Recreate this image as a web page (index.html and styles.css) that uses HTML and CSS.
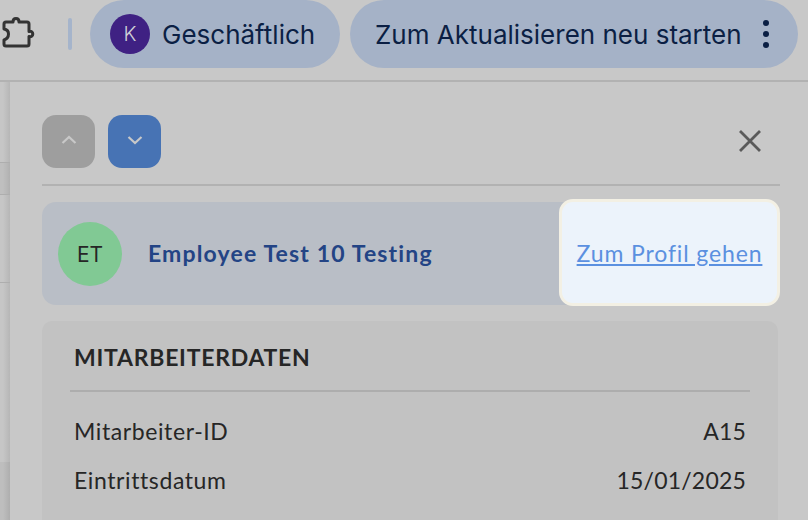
FILE: index.html
```html
<!DOCTYPE html>
<html lang="de">
<head>
<meta charset="utf-8">
<title>Mitarbeiter</title>
<link rel="stylesheet" href="styles.css">
</head>
<body>
<header class="toolbar">
  <svg class="puzzle" width="34" height="34" viewBox="0 0 34 34" fill="none" stroke="#333" stroke-width="3" stroke-linejoin="round" stroke-linecap="round">
    <path d="M3 8 Q3 6 5 6 H12 C12 3.500 13 2.500 15 2.500 C17 2.500 18 3.500 18 6 H26 Q28 6 28 8 V15.500 C30 14.800 31.800 16 31.800 18 C31.800 20 30 21.200 28 20.500 V28 Q28 30 26 30 H5 Q3 30 3 28 V24 C6 23 7.500 20.500 7.500 18 C7.500 15.500 6 13.500 3 13 Z"/>
  </svg>
  <span class="sep"></span>
  <div class="chip chip-profile">
    <span class="avatar">K</span>
    <span class="chip-label">Geschäftlich</span>
  </div>
  <div class="chip chip-update">
    <span class="chip-label">Zum Aktualisieren neu starten</span>
    <span class="dots"><i></i><i></i><i></i></span>
  </div>
</header>
<div class="stage">
  <aside class="backdrop">
    <div class="back-band"></div>
    <div class="back-row"></div>
    <div class="back-foot"></div>
  </aside>
  <main class="panel">
    <div class="panel-head">
      <button class="nav nav-up" type="button" aria-label="Zurück">
        <svg width="16" height="10" viewBox="0 0 16 10" fill="none" stroke="#c8c8c8" stroke-width="2.200"><path d="M1.500 8 L8 2 L14.500 8"/></svg>
      </button>
      <button class="nav nav-down" type="button" aria-label="Weiter">
        <svg width="16" height="10" viewBox="0 0 16 10" fill="none" stroke="#c8c8c8" stroke-width="2.200"><path d="M1.500 2 L8 8 L14.500 2"/></svg>
      </button>
      <svg class="close" width="24" height="24" viewBox="0 0 24 24" fill="none" stroke="#5a5a5a" stroke-width="2.800"><path d="M2 2 L22 22 M22 2 L2 22"/></svg>
    </div>
    <section class="employee">
      <span class="initials">ET</span>
      <span class="emp-name">Employee Test 10 Testing</span>
      <div class="profile-box"><a class="profile-link" href="#">Zum Profil gehen</a></div>
    </section>
    <section class="data-card">
      <h2 class="data-title">MITARBEITERDATEN</h2>
      <dl class="data-list">
        <div class="data-row"><dt>Mitarbeiter-ID</dt><dd>A15</dd></div>
        <div class="data-row"><dt>Eintrittsdatum</dt><dd>15/01/2025</dd></div>
      </dl>
    </section>
  </main>
</div>
</body>
</html>
```
FILE: styles.css
```css
* { box-sizing: border-box; }
html, body { margin: 0; height: 100%; }
body {
  width: 808px;
  height: 520px;
  overflow: hidden;
  background: #c8c8c8;
  font-family: "Lato", "Liberation Sans", sans-serif;
  color: #262626;
}
.toolbar {
  height: 82px;
  border-bottom: 2px solid #b2b2b2;
  display: flex;
  align-items: flex-start;
  padding-left: 1px;
}
.puzzle { margin-top: 16px; flex: none; }
.sep {
  flex: none;
  width: 4px;
  height: 32px;
  margin: 18px 18px 0 33px;
  background: #a5b4cb;
  border-radius: 2px;
}
.chip {
  height: 68px;
  background: #a5b2c7;
  border-radius: 34px;
  display: flex;
  align-items: center;
  font-family: "Inter", sans-serif;
  font-size: 26px;
  color: #0b1f44;
  flex: none;
}
.chip-profile { width: 250px; padding-left: 20px; gap: 12px; }
.chip-update { width: 448px; margin-left: 10px; padding-left: 25px; gap: 21px; }
.chip-label { white-space: nowrap; padding-top: 1px; }
.avatar {
  width: 40px;
  height: 40px;
  border-radius: 50%;
  background: #3f2183;
  color: #cfcfd6;
  font-size: 20px;
  font-weight: 300;
  display: flex;
  align-items: center;
  justify-content: center;
}
.dots { display: flex; flex-direction: column; gap: 5px; }
.dots i { display: block; width: 6px; height: 6px; border-radius: 50%; background: #0b1f44; }
.stage { display: flex; height: 438px; }
.backdrop {
  flex: none;
  width: 10px;
  background: linear-gradient(to right, #c6c6c6 30%, #b6b6b6);
  position: relative;
}
.back-band {
  position: absolute;
  top: 80px;
  left: 0;
  right: 0;
  height: 33px;
  background: rgba(0, 0, 0, 0.03);
  border-top: 1px solid #aeaeae;
  border-bottom: 1px solid #aeaeae;
}
.back-row { position: absolute; left: 0; right: 0; top: 200px; height: 1px; background: #aeaeae; }
.back-foot {
  position: absolute;
  left: 0;
  right: 0;
  top: 380px;
  bottom: 0;
  background: rgba(0, 0, 0, 0.04);
}
.panel { flex: 1; padding: 33px 28px 0 32px; min-width: 0; }
.panel-head {
  height: 71px;
  border-bottom: 2px solid #b2b2b2;
  display: flex;
  align-items: flex-start;
  gap: 13px;
}
.nav {
  width: 53px;
  height: 53px;
  border: 0;
  border-radius: 14px;
  padding: 0 0 4px;
  display: flex;
  align-items: center;
  justify-content: center;
}
.nav-up { background: #9e9e9e; }
.nav-down { background: #4773b4; }
.close { margin: 14px 18px 0 auto; }
.employee {
  margin-top: 16px;
  height: 103px;
  background: #b9bec6;
  border-radius: 14px;
  display: flex;
  align-items: center;
  padding-left: 16px;
  position: relative;
}
.initials {
  width: 64px;
  height: 64px;
  padding-top: 1px;
  border-radius: 50%;
  background: #81c994;
  font-family: "Inter", sans-serif;
  font-size: 21px;
  display: flex;
  align-items: center;
  justify-content: center;
}
.emp-name {
  margin-left: 26px;
  padding-bottom: 2px;
  font-size: 23px;
  font-weight: 700;
  color: #234485;
  letter-spacing: 1.15px;
}
.profile-box {
  position: absolute;
  right: 0;
  top: -3px;
  width: 221px;
  height: 107px;
  background: #ecf3fb;
  border: 3px solid #f3f0e4;
  border-radius: 14px;
  display: flex;
  align-items: center;
  justify-content: center;
}
.profile-link { color: #5b90e0; font-size: 23px; letter-spacing: 0.87px; text-decoration: underline; }
.data-card {
  margin-top: 16px;
  margin-right: 2px;
  height: 199px;
  background: #c2c2c2;
  border-radius: 10px 10px 0 0;
  padding: 0 28px;
}
.data-title {
  margin: 0;
  height: 71px;
  line-height: 72px;
  padding-left: 4px;
  font-size: 23px;
  font-weight: 700;
  letter-spacing: 0.75px;
  border-bottom: 2px solid #adadad;
}
.data-list { margin: 17px 0 0; padding: 0 4px; }
.data-row {
  display: flex;
  justify-content: space-between;
  height: 49px;
  line-height: 44px;
  font-size: 23px;
  letter-spacing: 0.6px;
}
.data-row dd { margin: 0; letter-spacing: 0.2px; }
```
